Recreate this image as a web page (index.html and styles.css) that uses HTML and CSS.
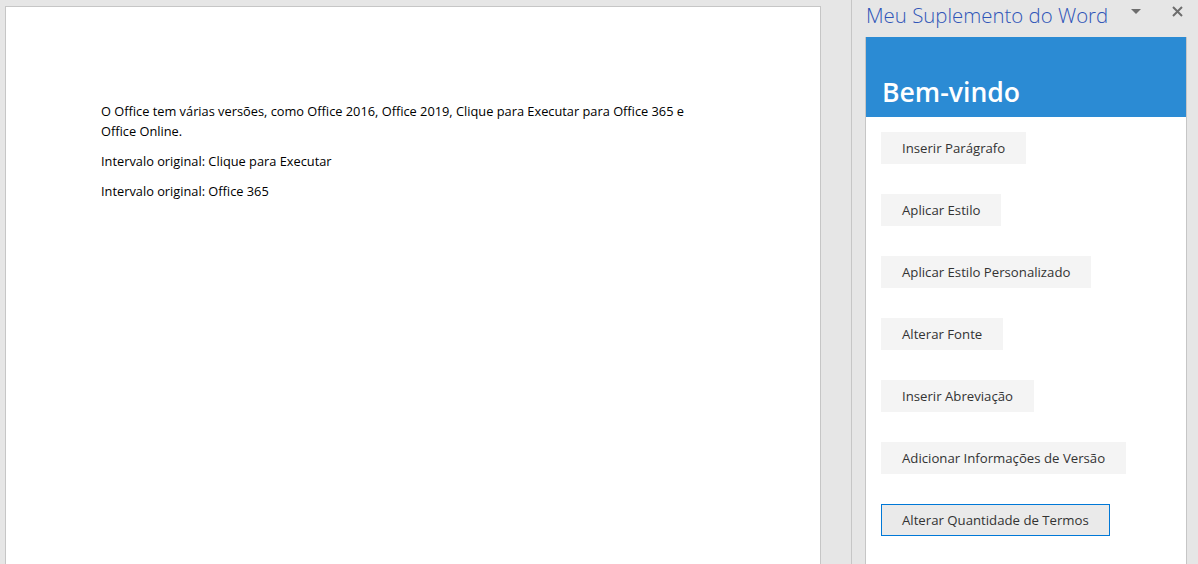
FILE: index.html
```html
<!DOCTYPE html>
<html lang="pt">
<head>
<meta charset="utf-8">
<title>Meu Suplemento do Word</title>
<link rel="stylesheet" href="styles.css">
</head>
<body>
<div class="app">
  <div class="doc-area">
    <div class="page">
      <p>O Office tem várias versões, como Office 2016, Office 2019, Clique para Executar para Office 365 e<br>Office Online.</p>
      <p>Intervalo original: Clique para Executar</p>
      <p>Intervalo original: Office 365</p>
    </div>
  </div>
  <div class="pane">
    <div class="pane-head">
      <div class="pane-title">Meu Suplemento do Word</div>
      <svg class="ico-drop" width="10" height="6" viewBox="0 0 10 6"><path d="M0 0H10L5 5Z" fill="#6d6d6d"/></svg>
      <svg class="ico-close" width="11" height="11" viewBox="0 0 11 11"><path d="M1 1L10 10M10 1L1 10" stroke="#6d6d6d" stroke-width="2"/></svg>
    </div>
    <div class="pane-body">
      <div class="banner"><h1>Bem-vindo</h1></div>
      <div class="buttons">
        <button class="btn">Inserir Parágrafo</button>
        <button class="btn">Aplicar Estilo</button>
        <button class="btn">Aplicar Estilo Personalizado</button>
        <button class="btn">Alterar Fonte</button>
        <button class="btn">Inserir Abreviação</button>
        <button class="btn">Adicionar Informações de Versão</button>
        <button class="btn btn-focus">Alterar Quantidade de Termos</button>
      </div>
    </div>
  </div>
</div>
</body>
</html>
```
FILE: styles.css
```css
html, body {
  margin: 0;
  height: 100%;
  overflow: hidden;
}
body {
  background: #e6e6e6;
  font-family: "Open Sans", "Noto Sans", sans-serif;
}
.app {
  display: flex;
  height: 564px;
}
.doc-area {
  width: 852px;
  padding: 6px 0 0 5px;
  box-sizing: border-box;
  border-right: 1px solid #c6c6c6;
}
.page {
  width: 816px;
  height: 100%;
  box-sizing: border-box;
  background: #fff;
  border: 1px solid #c6c6c6;
  border-bottom: none;
  padding: 94px 0 0 95px;
  font-family: "Open Sans", sans-serif;
  font-size: 12.8px;
  color: #000;
}
.page p {
  margin: 0 0 10px;
  line-height: 20px;
}
.pane {
  flex: 1;
  padding-left: 13px;
  padding-right: 11px;
  display: flex;
  flex-direction: column;
}
.pane-head {
  height: 37px;
  display: flex;
  align-items: flex-start;
  position: relative;
}
.pane-title {
  font-family: "Open Sans", sans-serif;
  font-weight: 300;
  font-size: 20.4px;
  line-height: 28px;
  color: #2f55b8;
  padding: 1px 0 0 1px;
}
.ico-drop {
  position: absolute;
  left: 266px;
  top: 9px;
}
.ico-close {
  position: absolute;
  left: 307px;
  top: 6px;
}
.pane-body {
  flex: 1;
  background: #fff;
  border-left: 1px solid #c6c6c6;
  border-right: 1px solid #c6c6c6;
}
.banner {
  background: #2b8bd4;
  height: 80px;
  display: flex;
  align-items: flex-end;
  padding: 0 0 10px 16px;
  box-sizing: border-box;
}
.banner h1 {
  margin: 0;
  color: #fff;
  font-family: "Open Sans", sans-serif;
  font-weight: 600;
  font-size: 26.6px;
  line-height: 30px;
}
.buttons {
  display: flex;
  flex-direction: column;
  align-items: flex-start;
  gap: 30px;
  padding: 15px 0 0 15px;
}
.btn {
  height: 32px;
  background: #f4f4f4;
  border: 1px solid #f4f4f4;
  padding: 0 20px;
  font-family: "Open Sans", sans-serif;
  font-size: 13.2px;
  color: #333;
  cursor: pointer;
}
.btn-focus {
  background: #eaeaea;
  border-color: #0078d7;
}
```
